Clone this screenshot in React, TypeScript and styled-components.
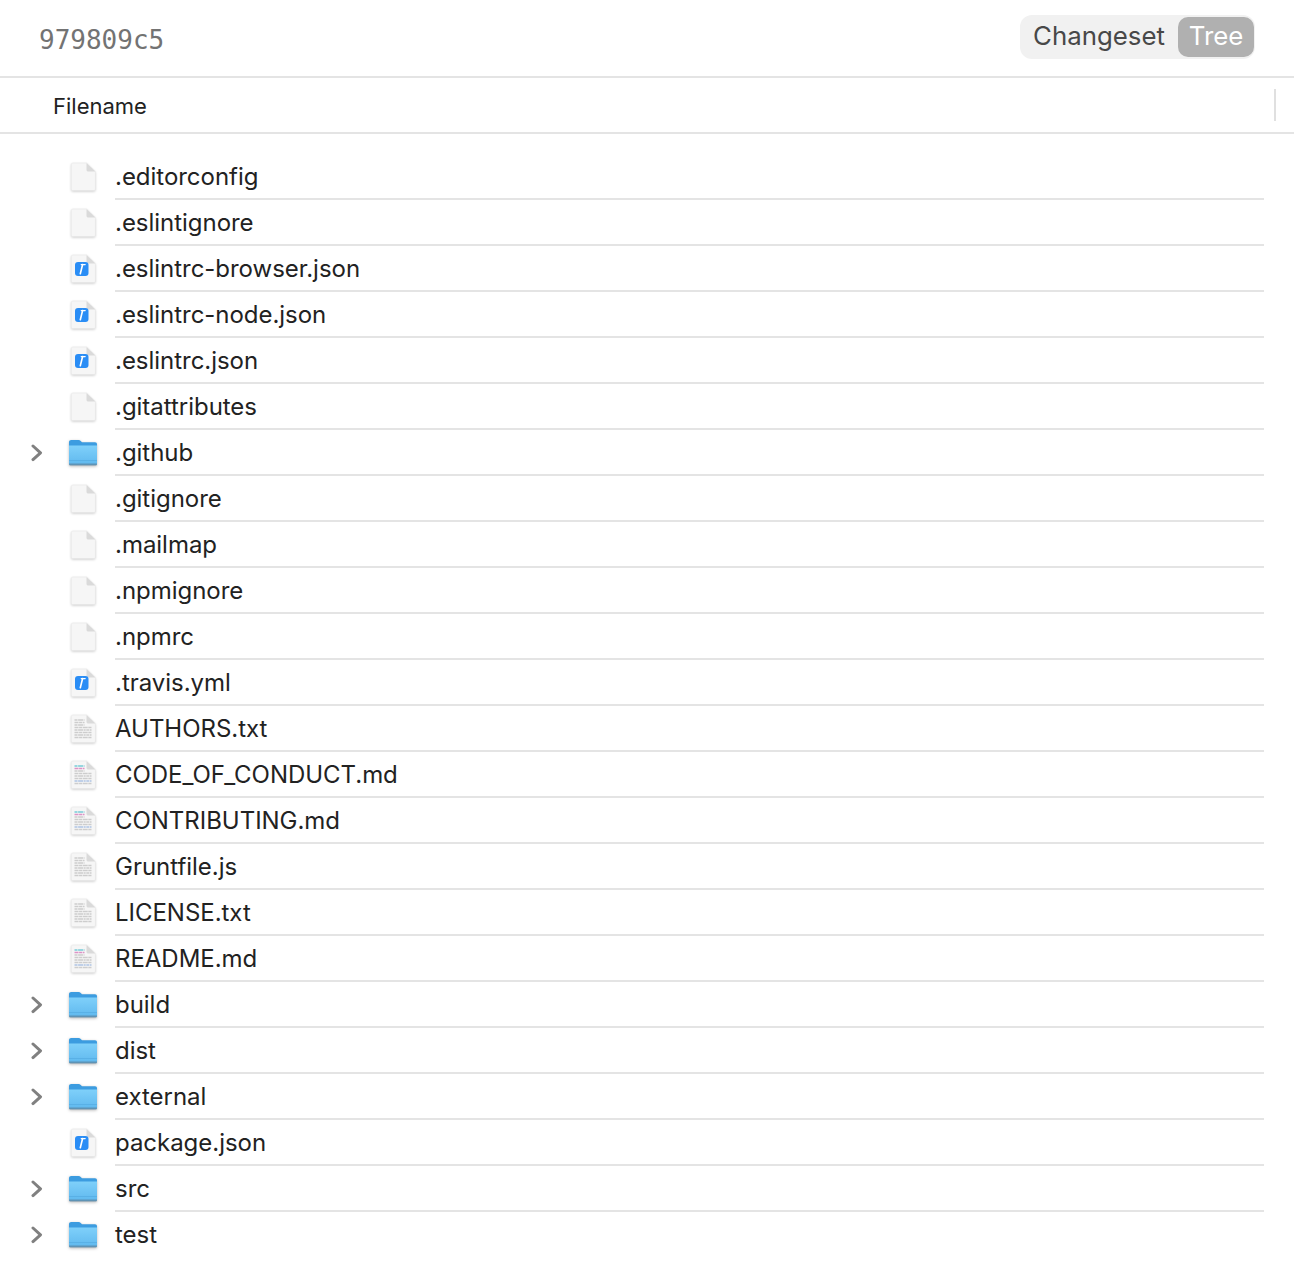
import React from 'react'
import styled, { createGlobalStyle } from 'styled-components'

const GlobalStyle = createGlobalStyle`
  html, body {
    margin: 0;
    background: #fff;
    font-family: Inter, "Liberation Sans", sans-serif;
  }
`

const Page = styled.div`
  width: 1294px;
  height: 1280px;
  overflow: hidden;
  background: #fff;
`

const TopBar = styled.header`
  height: 78px;
  box-sizing: border-box;
  padding: 16px 39px 0 39px;
  display: flex;
  justify-content: space-between;
  align-items: flex-start;
  border-bottom: 2px solid #e4e4e4;
`

const Hash = styled.div`
  font-family: "DejaVu Sans Mono", monospace;
  font-size: 26px;
  line-height: 48px;
  color: #737373;
`

const Segmented = styled.div`
  width: 235px;
  height: 44px;
  margin-top: -1px;
  padding: 2px 1px 2px 0;
  box-sizing: border-box;
  border-radius: 12px;
  background: #f1f1f1;
  display: flex;
  justify-content: flex-end;
`

const Segment = styled.div<{ $active?: boolean }>`
  height: 40px;
  box-sizing: border-box;
  padding-bottom: 4px;
  display: flex;
  flex-shrink: 0;
  align-items: center;
  justify-content: center;
  border-radius: 10px;
  font-size: 25.8px;
  color: ${({ $active }) => ($active ? '#fff' : '#484848')};
  background: ${({ $active }) => ($active ? '#b0b0b0' : 'transparent')};
  width: ${({ $active }) => ($active ? '76px' : '158px')};
`

const ColumnHeader = styled.div`
  height: 56px;
  box-sizing: border-box;
  padding: 2px 18px 0 53px;
  display: flex;
  align-items: center;
  justify-content: space-between;
  border-bottom: 2px solid #e4e4e4;
  font-size: 22px;
  color: #222;
`

const ColumnDivider = styled.div`
  width: 2px;
  height: 32px;
  margin-top: -2px;
  background: #e0e0e0;
`

const List = styled.div`
  padding: 20px 30px 0 0;
`

const Row = styled.div`
  height: 46px;
  display: flex;
  align-items: center;
`

const Chevron = styled.div`
  width: 68px;
  padding-left: 31px;
  box-sizing: border-box;
  display: flex;
  flex-shrink: 0;
`

const IconSlot = styled.div`
  width: 47px;
  height: 46px;
  flex-shrink: 0;
  display: flex;
  align-items: center;
`

const Name = styled.div<{ $last?: boolean }>`
  flex: 1;
  height: 46px;
  box-sizing: border-box;
  border-bottom: 2px solid ${({ $last }) => ($last ? 'transparent' : '#e4e4e4')};
  font-size: 24px;
  line-height: 46px;
  letter-spacing: -0.03px;
  color: #222;
`

const SheetSvg = styled.svg`
  overflow: visible;
  filter: drop-shadow(0 1px 1px rgba(0, 0, 0, 0.18));
`

const FolderSvg = styled.svg`
  overflow: visible;
  margin-left: -1px;
  filter: drop-shadow(0 1px 1.5px rgba(0, 0, 0, 0.28));
`

const ChevronIcon = () => (
  <svg width="12" height="18" viewBox="0 0 12 18">
    <path d="M2 2l7.5 6.8L2 15.6" fill="none" stroke="#808080" strokeWidth="3" strokeLinecap="round" strokeLinejoin="round" />
  </svg>
)

const FolderIcon = ({ id }: { id: string }) => (
  <FolderSvg width="32" height="30" viewBox="0 1 32 30">
    <defs>
      <linearGradient id={id} x1="0" y1="0" x2="0" y2="1">
        <stop offset="0" stopColor="#7fd0fa" />
        <stop offset="1" stopColor="#5fb8ee" />
      </linearGradient>
    </defs>
    <path d="M2 5C2 3.8 3 3 4.2 3h7.3c1 0 1.6.4 2.2 1l1.3 1.2h13c1.3 0 2 .9 2 2.2V12H2z" fill="#3c9ce0" />
    <path d="M2 8.4h28V26.4c0 1-.7 1.6-1.7 1.6H3.7C2.7 28 2 27.4 2 26.4z" fill={`url(#${id})`} />
    <rect x="2" y="23" width="28" height="1" fill="#4ea6dc" opacity="0.55" />
    <path d="M2 26.6h28v.4c0 1-.6 1.6-1.6 1.6H3.6C2.6 28.6 2 28 2 27z" fill="#5e89a6" opacity="0.8" />
  </FolderSvg>
)

const Sheet = ({ children }: { children?: React.ReactNode }) => (
  <SheetSvg width="28" height="30" viewBox="0 0 28 30">
    <path
      d="M3.3 2.6C3.3 1.7 3.9 1 4.8 1h13.7l8.8 8.6V27c0 .9-.6 1.5-1.5 1.5H4.8c-.9 0-1.5-.6-1.5-1.5z"
      fill="#f6f6f6"
      stroke="#e8e8e8"
      strokeWidth="0.6"
    />
    <path d="M18.5 1v6.8c0 1 .7 1.8 1.8 1.8h7z" fill="#dadada" />
    {children}
  </SheetSvg>
)

const ScriptIcon = () => (
  <Sheet>
    <rect x="7" y="8" width="13.5" height="14" rx="3" fill="#2a8df5" />
    <path d="M14.6 10.5l-2.3 9.2" stroke="#fff" strokeWidth="1.6" strokeLinecap="round" />
    <path d="M13.2 10.6h4" stroke="#fff" strokeWidth="1.2" strokeLinecap="round" />
  </Sheet>
)

const textLines = [6, 8.5, 11, 13.5, 16, 18.5, 21, 23.5]

const TextIcon = ({ tinted }: { tinted?: boolean }) => (
  <Sheet>
    {textLines.map((y, i) => (
      <path
        key={y}
        d={`M6.5 ${y}h${i < 3 ? 10 : 17}`}
        stroke={tinted && i === 1 ? '#dc94c6' : tinted && i === 0 ? '#78ccd8' : tinted && i === 6 ? '#aec4e4' : '#cdcdcd'}
        strokeWidth="1.5"
        strokeDasharray={i % 2 ? '4 0.6 3 0.6 5 0.6' : '3 0.6 5 0.6 2 0.6'}
      />
    ))}
  </Sheet>
)

type Kind = 'plain' | 'script' | 'text' | 'doc' | 'folder'

const files: { name: string; kind: Kind }[] = [
  { name: '.editorconfig', kind: 'plain' },
  { name: '.eslintignore', kind: 'plain' },
  { name: '.eslintrc-browser.json', kind: 'script' },
  { name: '.eslintrc-node.json', kind: 'script' },
  { name: '.eslintrc.json', kind: 'script' },
  { name: '.gitattributes', kind: 'plain' },
  { name: '.github', kind: 'folder' },
  { name: '.gitignore', kind: 'plain' },
  { name: '.mailmap', kind: 'plain' },
  { name: '.npmignore', kind: 'plain' },
  { name: '.npmrc', kind: 'plain' },
  { name: '.travis.yml', kind: 'script' },
  { name: 'AUTHORS.txt', kind: 'text' },
  { name: 'CODE_OF_CONDUCT.md', kind: 'doc' },
  { name: 'CONTRIBUTING.md', kind: 'doc' },
  { name: 'Gruntfile.js', kind: 'text' },
  { name: 'LICENSE.txt', kind: 'text' },
  { name: 'README.md', kind: 'doc' },
  { name: 'build', kind: 'folder' },
  { name: 'dist', kind: 'folder' },
  { name: 'external', kind: 'folder' },
  { name: 'package.json', kind: 'script' },
  { name: 'src', kind: 'folder' },
  { name: 'test', kind: 'folder' },
]

const renderIcon = (kind: Kind, name: string) => {
  switch (kind) {
    case 'folder':
      return <FolderIcon id={`folder-${name}`} />
    case 'script':
      return <ScriptIcon />
    case 'text':
      return <TextIcon />
    case 'doc':
      return <TextIcon tinted />
    default:
      return <Sheet />
  }
}

const App = () => (
  <Page>
    <GlobalStyle />
    <TopBar>
      <Hash>979809c5</Hash>
      <Segmented>
        <Segment>Changeset</Segment>
        <Segment $active>Tree</Segment>
      </Segmented>
    </TopBar>
    <ColumnHeader>
      Filename
      <ColumnDivider />
    </ColumnHeader>
    <List>
      {files.map(({ name, kind }, i) => (
        <Row key={name}>
          <Chevron>{kind === 'folder' && <ChevronIcon />}</Chevron>
          <IconSlot>{renderIcon(kind, name)}</IconSlot>
          <Name $last={i === files.length - 1}>{name}</Name>
        </Row>
      ))}
    </List>
  </Page>
)

export default App
